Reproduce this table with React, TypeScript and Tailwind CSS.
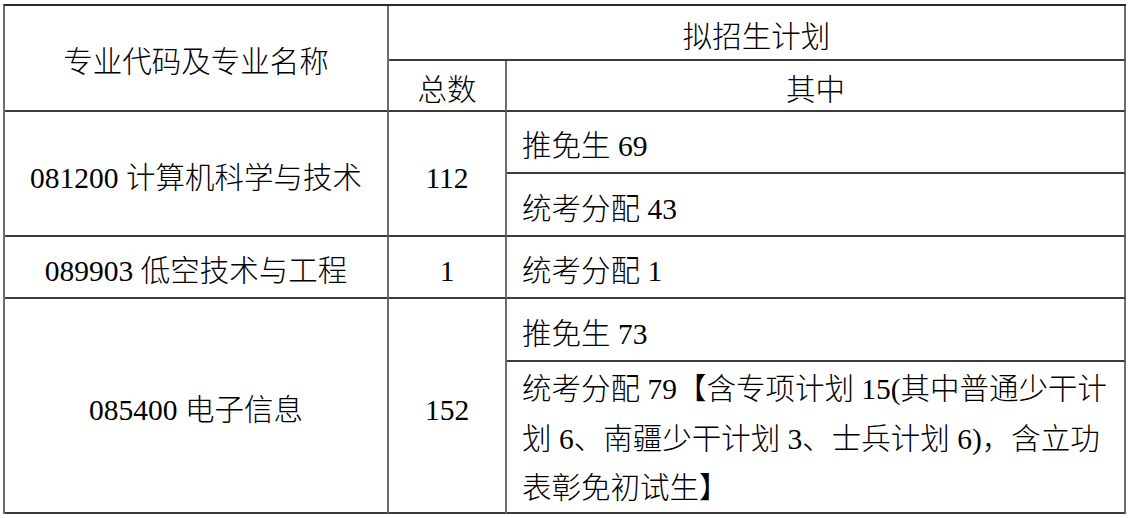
const cell = 'flex items-center border-r-2 border-b-2 border-r-[#6e6e6e] border-b-[#3c3c3c] pt-[10px]';

export default function App() {
  return (
    <div className="min-h-[518px] w-[1129px] bg-white pl-[3px] pt-[4px]">
      <div
        className="grid w-[1123px] grid-cols-[384px_118px_619px] grid-rows-[55px_51px_62px_63px_62px_63px_152px] border-l-2 border-t-2 border-l-[#6e6e6e] border-t-[#2a2a2a] text-[29.5px] leading-none font-light text-black"
        style={{ fontFamily: '"Liberation Serif", "Noto Sans CJK SC", serif' }}
      >
        {/* header */}
        <div className={`${cell} col-start-1 row-span-2 row-start-1 justify-center`}>专业代码及专业名称</div>
        <div className={`${cell} col-span-2 col-start-2 row-start-1 justify-center`}>拟招生计划</div>
        <div className={`${cell} col-start-2 row-start-2 justify-center`}>总数</div>
        <div className={`${cell} col-start-3 row-start-2 justify-center`}>其中</div>

        {/* 081200 */}
        <div className={`${cell} col-start-1 row-span-2 row-start-3 justify-center`}>081200 计算机科学与技术</div>
        <div className={`${cell} col-start-2 row-span-2 row-start-3 justify-center`}>112</div>
        <div className={`${cell} col-start-3 row-start-3 pl-[15px]`}>推免生 69</div>
        <div className={`${cell} col-start-3 row-start-4 pl-[15px]`}>统考分配 43</div>

        {/* 089903 */}
        <div className={`${cell} col-start-1 row-start-5 justify-center`}>089903 低空技术与工程</div>
        <div className={`${cell} col-start-2 row-start-5 justify-center`}>1</div>
        <div className={`${cell} col-start-3 row-start-5 pl-[15px]`}>统考分配 1</div>

        {/* 085400 */}
        <div className={`${cell} col-start-1 row-span-2 row-start-6 justify-center`}>085400 电子信息</div>
        <div className={`${cell} col-start-2 row-span-2 row-start-6 justify-center`}>152</div>
        <div className={`${cell} col-start-3 row-start-6 pl-[15px]`}>推免生 73</div>
        <div className="col-start-3 row-start-7 border-r-2 border-b-2 border-r-[#6e6e6e] border-b-[#3c3c3c] pl-[15px] pt-[3px] leading-[49.5px] whitespace-nowrap">
          统考分配 79【含专项计划 15(其中普通少干计
          <br />
          划 6、南疆少干计划 3、士兵计划 6)，含立功
          <br />
          表彰免初试生】
        </div>
      </div>
    </div>
  );
}
